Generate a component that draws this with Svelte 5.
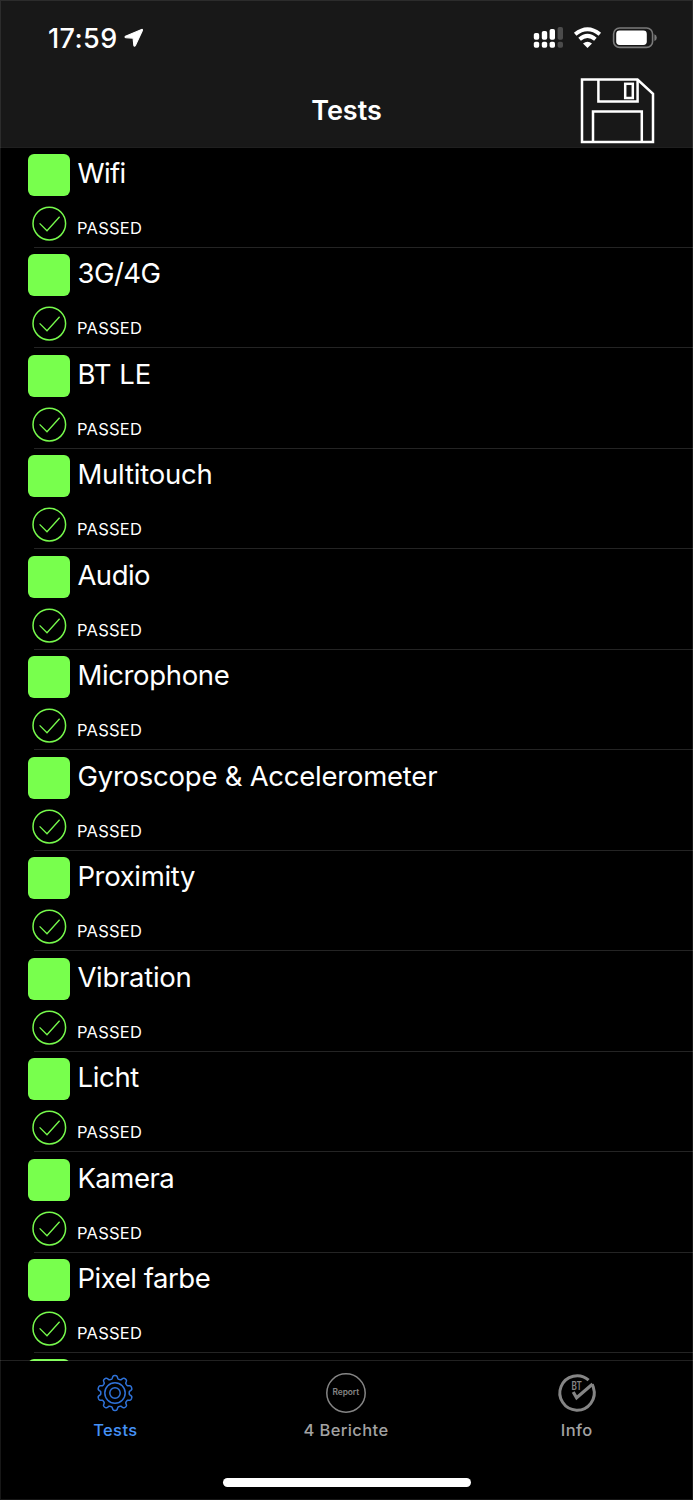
<script lang="ts">
	const time = '17:59'
	const title = 'Tests'

	const tests = [
		{ name: 'Wifi', spacing: -0.6 },
		{ name: '3G/4G', spacing: -0.5 },
		{ name: 'BT LE', spacing: 0 },
		{ name: 'Multitouch', spacing: -0.2 },
		{ name: 'Audio', spacing: -0.5 },
		{ name: 'Microphone', spacing: -0.35 },
		{ name: 'Gyroscope & Accelerometer', spacing: -0.24 },
		{ name: 'Proximity', spacing: -0.35 },
		{ name: 'Vibration', spacing: -0.28 },
		{ name: 'Licht', spacing: -0.3 },
		{ name: 'Kamera', spacing: -0.5 },
		{ name: 'Pixel farbe', spacing: -0.46 }
	]

	// closed outline with rounded teeth, centred on 0,0
	function gear(teeth: number, inner: number, outer: number) {
		const points = []
		for (let i = 0; i < 240; i++) {
			const a = (i / 240) * Math.PI * 2
			const wave = Math.tanh(2.2 * Math.cos(a * teeth)) / Math.tanh(2.2)
			const r = (inner + outer) / 2 + (wave * (outer - inner)) / 2
			points.push(`${(r * Math.sin(a)).toFixed(2)} ${(-r * Math.cos(a)).toFixed(2)}`)
		}
		return `M${points.join('L')}Z`
	}
</script>

<div class="phone">
	<header>
		<div class="status">
			<span class="time">{time}</span>
			<svg class="location" width="20" height="20" viewBox="0 0 20 20">
				<path d="M17.6 1.5 1.5 8.2Q.4 9.2 1.8 9.7L9.1 10.1 9.8 17.3Q10.4 19 11.4 17.5L18.4 2.4Q18.8 1.1 17.6 1.5Z" fill="#fff" stroke="#fff" stroke-width="1.1" stroke-linejoin="round" />
			</svg>
			<svg class="indicators" width="124" height="24" viewBox="0 0 124 24">
				<g fill="#fff">
					<rect x="0.8" y="7" width="5.4" height="6.8" rx="1.8" />
					<rect x="8.8" y="5" width="5.4" height="8.8" rx="1.8" />
					<rect x="16.6" y="3" width="5.4" height="10.8" rx="1.8" />
					<rect x="0.8" y="15.8" width="5.4" height="6" rx="1.8" />
					<rect x="8.8" y="15.8" width="5.4" height="6" rx="1.8" />
					<rect x="16.6" y="15.8" width="5.4" height="6" rx="1.8" />
				</g>
				<g fill="#4b4b4b">
					<rect x="24.6" y="1" width="5.4" height="12.8" rx="1.8" />
					<rect x="24.6" y="15.8" width="5.4" height="6" rx="1.8" />
				</g>
				<g fill="none" stroke="#fff" stroke-width="4">
					<path d="M42.2 8.2Q54.5-1.8 66.8 8.2" />
					<path d="M46.6 13.2Q54.5 6.6 62.4 13.2" />
				</g>
				<path d="M50 17.5Q54.5 13.8 59 17.5L54.5 22Z" fill="#fff" />
				<rect x="80.6" y="2" width="39" height="19.4" rx="6" fill="none" stroke="#7a7a7a" stroke-width="1.6" />
				<rect x="83.2" y="4.5" width="30.6" height="14.4" rx="3.4" fill="#fff" />
				<path d="M121.4 8.3Q123.8 9.3 123.8 11.7T121.4 15.1Z" fill="#7a7a7a" />
			</svg>
		</div>
		<div class="bar">
			<h1>{title}</h1>
			<svg class="save" width="76" height="68" viewBox="0 0 76 68" fill="none" stroke="#fff" stroke-width="2.5">
				<path d="M3 2.6H58.5L74 16.8V65H3Z" />
				<path d="M19.4 2.6V24.6H58.6V2.6" />
				<rect x="46.2" y="6.8" width="7.6" height="14.2" />
				<path d="M14 65V34.4H62.8V65" />
			</svg>
		</div>
	</header>

	<main>
		{#each tests as test}
			<div class="row">
				<div class="head">
					<span class="swatch"></span>
					<span class="name" style="letter-spacing: {test.spacing}px">{test.name}</span>
				</div>
				<div class="result">
					<svg width="36" height="36" viewBox="0 0 36 36" fill="none" stroke="#76f94c">
						<circle cx="18.3" cy="17.6" r="16.3" stroke-width="1.5" />
						<path d="M8.6 17.4 16 24.8 28.6 10.8" stroke-width="1.3" />
					</svg>
					<span>PASSED</span>
				</div>
			</div>
		{/each}
		<div class="row">
			<div class="head">
				<span class="swatch"></span>
			</div>
		</div>
	</main>

	<nav>
		<div class="tab active">
			<svg width="42" height="42" viewBox="-21 -21 42 42" fill="none" stroke="#2f72d8" stroke-width="1.5">
				<path d={gear(10, 14.2, 17.4)} />
				<circle r="10.2" />
				<circle r="5.2" />
			</svg>
			<span>Tests</span>
		</div>
		<div class="tab">
			<svg width="42" height="42" viewBox="-21 -21 42 42">
				<circle r="19.2" fill="none" stroke="#858585" stroke-width="1.5" />
				<text y="2.3" text-anchor="middle" textLength="27" font-size="8.4" font-weight="600" fill="#858585">Report</text>
			</svg>
			<span>4 Berichte</span>
		</div>
		<div class="tab">
			<svg width="42" height="42" viewBox="-21 -21 42 42" fill="none" stroke="#858585">
				<path d="M11.6-12.8A17.2 17.2 0 1 0 16.4-5.4L15.2-8.8" stroke-width="3" />
				<path d="M-3.8-1-.4 4.8 15.6-9" stroke-width="3.2" />
				<text x="-5.6" y="-2.8" font-size="11.4" font-weight="600" textLength="10.8" lengthAdjust="spacingAndGlyphs" fill="#858585" stroke="none">BT</text>
			</svg>
			<span>Info</span>
		</div>
	</nav>
	<div class="home"><span></span></div>
</div>

<style>
:global(body) {
	margin: 0;
	background: #000;
}

.phone {
	position: relative;
	display: flex;
	flex-direction: column;
	width: 693px;
	height: 1500px;
	overflow: hidden;
	background: #000;
	color: #fff;
	font-family: Inter, sans-serif;
}

/* hairline around the whole screen */
.phone::after {
	content: '';
	position: absolute;
	inset: 0;
	border: 1px solid rgba(255, 255, 255, 0.09);
	pointer-events: none;
}

header {
	flex: none;
	height: 148px;
	background: #181818;
	box-sizing: border-box;
	border-bottom: 1px solid #1f1f1f;
}

.status {
	display: flex;
	align-items: center;
	height: 76px;
	padding: 0 36px 0 48px;
}

.time {
	width: 70px;
	font-size: 27px;
	font-weight: 500;
	letter-spacing: 0.4px;
	white-space: nowrap;
}

.location {
	margin-left: 6px;
}

.indicators {
	margin-left: auto;
}

.bar {
	display: grid;
	grid-template-columns: 1fr auto 1fr;
	align-items: center;
	height: 70px;
	padding: 0 38px;
}

h1 {
	grid-column: 2;
	margin: 0;
	font-size: 27px;
	font-weight: 600;
	line-height: 34px;
}

.save {
	justify-self: end;
}

main {
	flex: none;
	height: 1213px;
	overflow: hidden;
}

.row {
	height: 100.46px;
	padding: 6px 0 0 28.4px;
	box-sizing: border-box;
	background: linear-gradient(#242424, #242424) 34px 99px / 100% 1px no-repeat;
}

.head {
	display: flex;
	height: 42px;
}

.swatch {
	width: 42px;
	height: 42px;
	margin-right: 7px;
	border-radius: 6px;
	background: #78ff4d;
}

.name {
	font-size: 27.5px;
	line-height: 39px;
	white-space: nowrap;
}

.result {
	display: flex;
	align-items: center;
	margin: 10px 0 0 2.6px;
}

.result span {
	margin: 8px 0 0 10px;
	font-size: 16.5px;
	letter-spacing: 0.25px;
	line-height: 20px;
}

nav {
	display: flex;
	flex: none;
	box-sizing: border-box;
	height: 105px;
	margin-top: -1px;
	padding-right: 1px;
	border-top: 1px solid rgba(255, 255, 255, 0.13);
}

.tab {
	display: flex;
	flex: 1;
	flex-direction: column;
	align-items: center;
	padding-top: 11px;
	color: #a3a3a3;
	font-size: 16.5px;
	font-weight: 500;
	letter-spacing: 0.4px;
}

.tab span {
	margin-top: 5px;
	line-height: 22px;
}

.active {
	color: #4592f7;
}

.home {
	display: flex;
	justify-content: center;
	padding-top: 13px;
}

.home span {
	width: 248px;
	height: 9px;
	border-radius: 5px;
	background: #fff;
}
</style>
